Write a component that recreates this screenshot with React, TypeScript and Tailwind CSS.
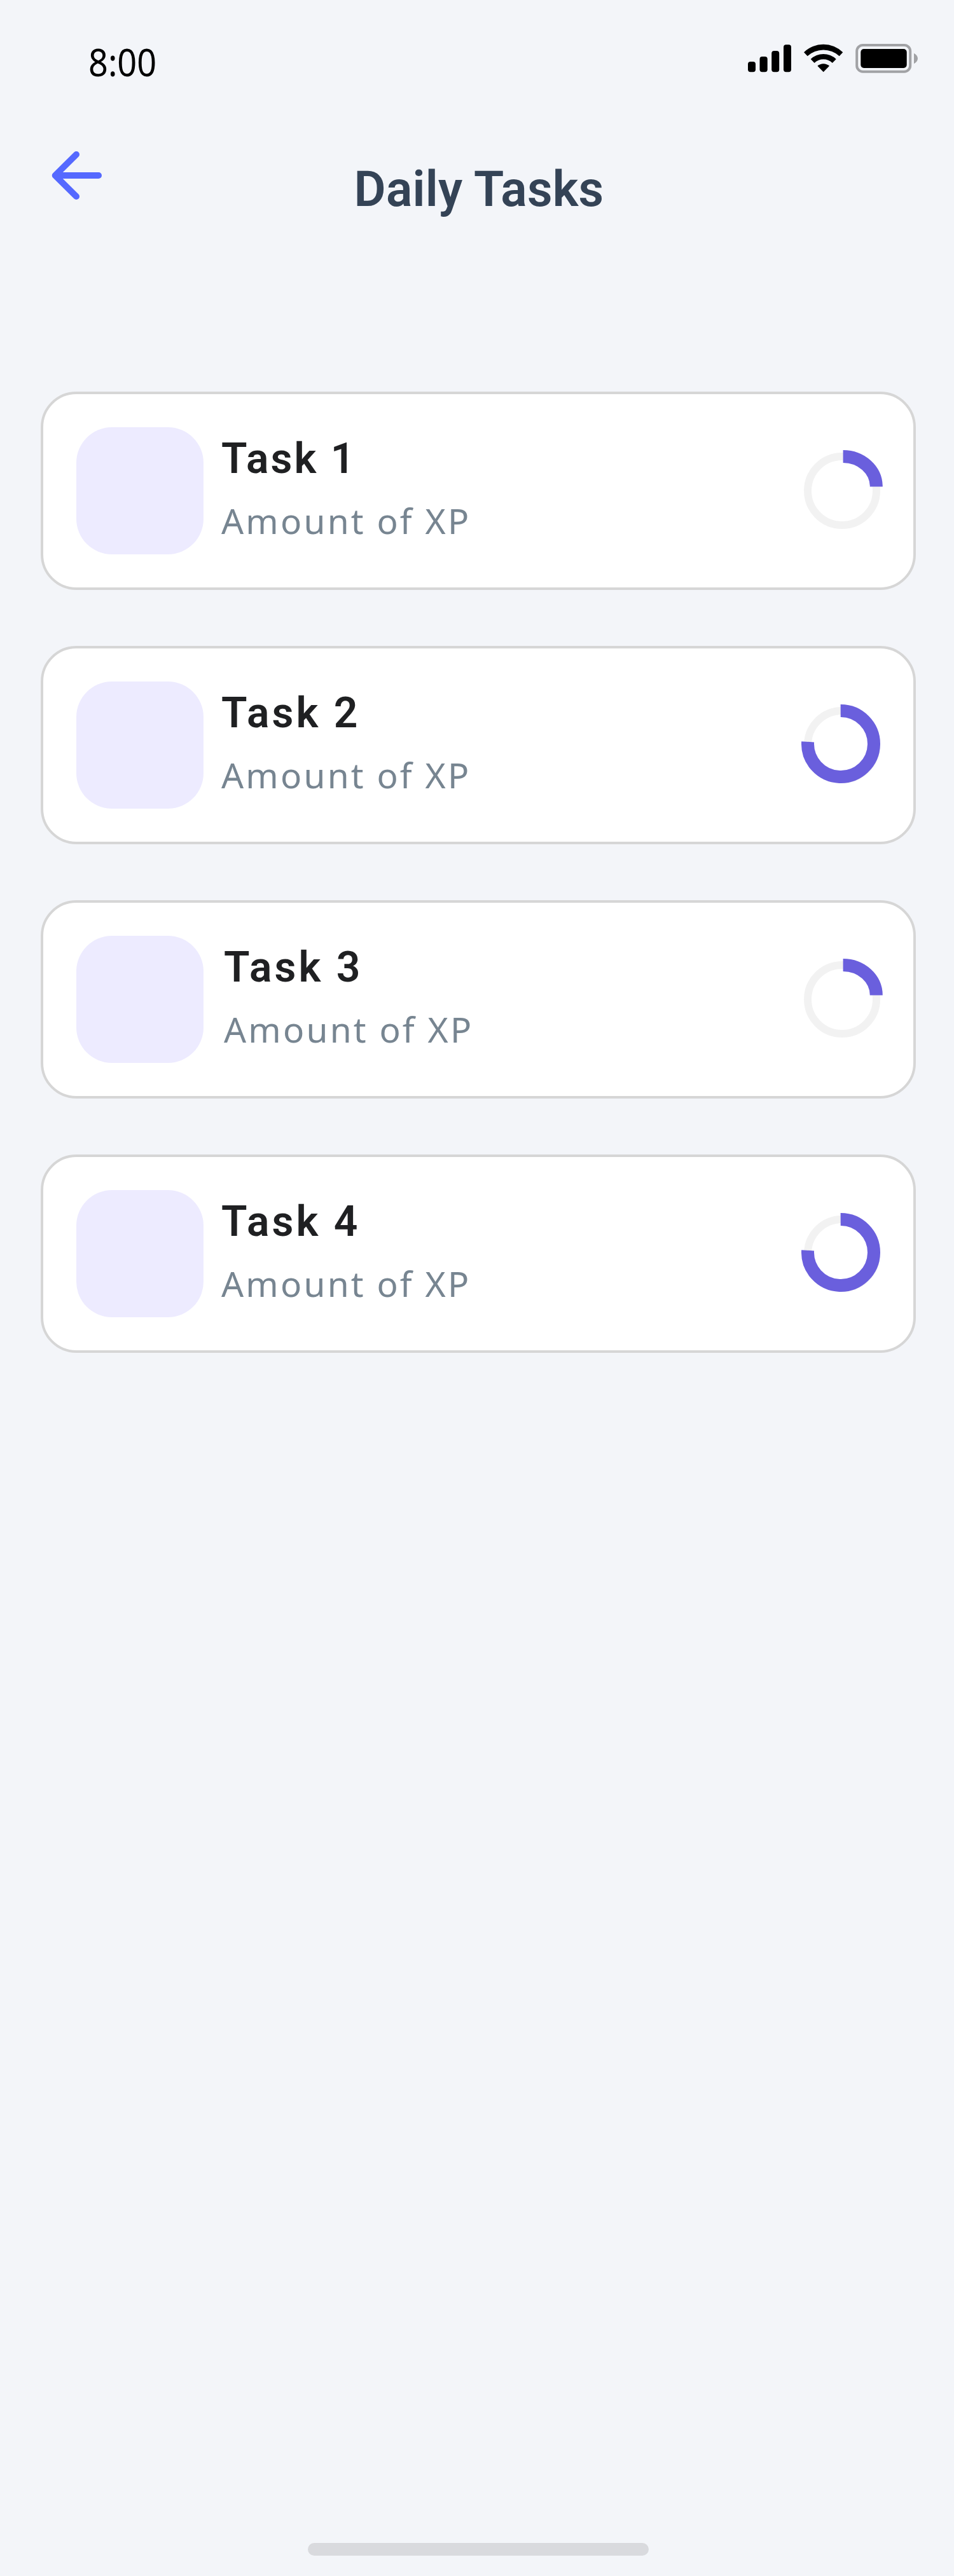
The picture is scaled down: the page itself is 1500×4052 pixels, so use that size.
const tasks = [
  { title: "Task 1", progress: 25, inset: "pl-7", tracking: "tracking-[3px]" },
  { title: "Task 2", progress: 75, inset: "pl-7", tracking: "tracking-[4px]" },
  { title: "Task 3", progress: 25, inset: "pl-8", tracking: "tracking-[4px]" },
  { title: "Task 4", progress: 75, inset: "pl-7", tracking: "tracking-[4px]" },
];

function StatusIcons() {
  return (
    <svg className="h-[50px] w-[270px]" viewBox="1175 67 270 50" fill="none">
      <g fill="#000">
        <rect x="1176" y="97" width="12" height="16.3" rx="4" />
        <rect x="1194.5" y="89" width="12.2" height="24.3" rx="4" />
        <rect x="1213.2" y="80" width="12" height="33.3" rx="4" />
        <rect x="1232" y="70.3" width="12" height="43" rx="4" />
        <path d="M1264 82.3 A43.5 43.5 0 0 1 1325.3 82.3 L1319.7 88.3 A37 37 0 0 0 1269.7 88.3 Z" />
        <path d="M1274.7 93 A29 29 0 0 1 1314.7 93 L1308.8 99 A20.5 20.5 0 0 0 1280.5 99 Z" />
        <path d="M1285.4 103.8 A14 14 0 0 1 1304 103.8 L1294.7 113.3 Z" />
        <rect x="1353.3" y="77" width="72.4" height="30" rx="5" />
      </g>
      <rect x="1347.2" y="71" width="84" height="41.7" rx="9.5" stroke="#a1a2a5" strokeWidth="4" />
      <path d="M1437 83.8 C1441 86 1443 89 1443 92 C1443 95 1441 98 1437 100.2 Z" fill="#a1a2a5" />
    </svg>
  );
}

function ProgressRing({ progress }: { progress: number }) {
  return (
    <svg className="size-[136px] shrink-0" viewBox="1256 704 136 136" fill="none">
      <circle cx="1324" cy="772" r="54" stroke="#f2f2f2" strokeWidth="12" />
      {progress === 25 ? (
        <path d="M1325.6 718 A52.2 47.6 0 0 1 1377.8 765.6" stroke="#6a5fdd" strokeWidth="20" />
      ) : (
        <path d="M1321.7 718 A52 52 0 1 1 1270.1 766.8" stroke="#6a5fdd" strokeWidth="20" />
      )}
    </svg>
  );
}

export default function App() {
  return (
    <div className="flex h-[4052px] w-[1500px] flex-col bg-[#f3f5f9] font-[Roboto,sans-serif]">
      <header className="flex h-[140px] items-start justify-between pl-[139px] pr-[55px]">
        <span className="origin-left scale-x-90 pt-[52px] font-['Noto_Sans',sans-serif] text-[60px] leading-[90px] text-black">
          8:00
        </span>
        <div className="pt-[67px]"><StatusIcons /></div>
      </header>
      <div className="grid h-[476px] grid-cols-[1fr_auto_1fr] items-start px-20">
        <button aria-label="Back" className="mt-24 size-20">
          <svg className="size-20" viewBox="80 196 80 80" fill="none" stroke="#5569ff" strokeWidth="10" strokeLinecap="round" strokeLinejoin="round">
            <path d="M120 203 L86.7 236 L120 269 M87 236 H155" />
          </svg>
        </button>
        <h1 className="pt-[106px] pl-1.5 text-[77px] leading-[105px] font-semibold tracking-[0.25px] text-[#344356]">Daily Tasks</h1>
      </div>
      <main className="flex flex-col gap-[88px] pr-[60px] pl-16">
        {tasks.map((t) => (
          <section key={t.title} className="flex h-[312px] items-center rounded-[56px] border-4 border-[#d6d6d6] bg-white pr-[44px] pl-[52px]">
            <div className="size-[200px] rounded-[56px] bg-[#edebff]" />
            <div className={`flex-1 pb-[9px] ${t.inset}`}>
              <h2 className={`text-[66px] leading-[90px] font-semibold text-[#1f2022] ${t.tracking}`}>{t.title}</h2>
              <p className="mt-3 font-['Noto_Sans',sans-serif] text-[55px] leading-[80px] tracking-[3.2px] text-[#778591]">Amount of XP</p>
            </div>
            <ProgressRing progress={t.progress} />
          </section>
        ))}
      </main>
      <div className="mt-auto mb-8 ml-[484px] h-5 w-[536px] rounded-full bg-[#d9dade]" />
    </div>
  );
}
